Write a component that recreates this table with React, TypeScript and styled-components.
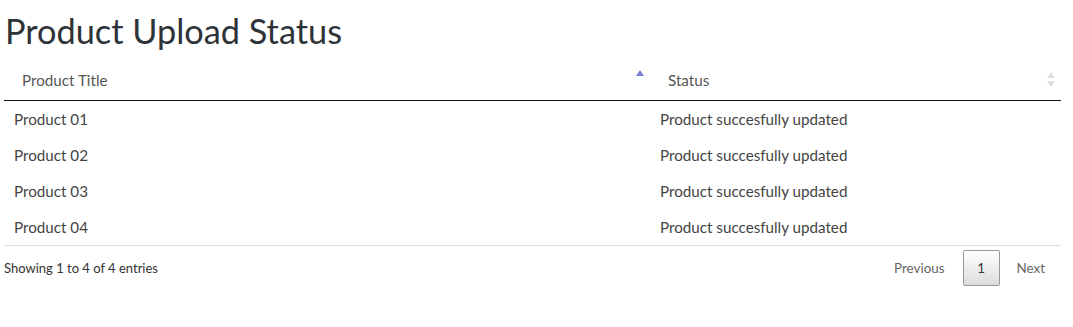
import React from "react";
import styled, { createGlobalStyle } from "styled-components";

const Global = createGlobalStyle`
  html, body { margin: 0; padding: 0; background: #fff; }
  body { font-family: Lato, "Open Sans", "Liberation Sans", sans-serif; color: #333; }
`;

const Page = styled.div`
  padding: 0 12px 0 4px;
`;

const Title = styled.h1`
  margin: 0;
  padding: 9px 0 0 1px;
  height: 61px;
  box-sizing: border-box;
  font-size: 34.3px;
  line-height: 44px;
  font-weight: 400;
  color: #2e3338;
`;

const Table = styled.table`
  width: 100%;
  border-collapse: collapse;
  table-layout: fixed;
  font-size: 15.2px;
`;

const HeadCell = styled.th<{ $w?: number }>`
  width: ${(p) => (p.$w ? `${p.$w}px` : "auto")};
  padding: 0 6px 0 18px;
  height: 39px;
  text-align: left;
  font-weight: 400;
  color: #555;
  border-bottom: 1px solid #111;
`;

const HeadInner = styled.div`
  display: flex;
  align-items: center;
  justify-content: space-between;
  margin-top: -1px;
`;

const Cell = styled.td`
  padding: 0 10px;
  height: 36px;
  color: #444;
`;

const Row = styled.tr<{ $last?: boolean }>`
  border-bottom: ${(p) => (p.$last ? "1px solid #ddd" : "none")};
`;

const Footer = styled.div`
  display: flex;
  align-items: center;
  justify-content: space-between;
  padding-top: 4px;
  height: 36px;
  font-size: 13px;
  color: #333;
`;

const Pager = styled.div`
  display: flex;
  align-items: center;
  gap: 2px;
  font-size: 13.4px;
`;

const PageButton = styled.span<{ $current?: boolean; $pad?: string }>`
  display: inline-flex;
  align-items: center;
  justify-content: center;
  box-sizing: border-box;
  height: 36px;
  min-width: ${(p) => (p.$current ? "37px" : "0")};
  padding: ${(p) => p.$pad ?? "0"};
  border: 1px solid ${(p) => (p.$current ? "#979797" : "transparent")};
  border-radius: 2px;
  background: ${(p) => (p.$current ? "linear-gradient(to bottom, #fff 0%, #dcdcdc 100%)" : "transparent")};
  color: ${(p) => (p.$current ? "#333" : "#666")};
`;

const AscIcon = () => (
  <svg width="8" height="14" viewBox="0 0 8 14" style={{ marginTop: -6 }}>
    <path d="M4 0 L8 6 L0 6 Z" fill="#7b7bd8" />
  </svg>
);

const BothIcon = () => (
  <svg width="8" height="16" viewBox="0 0 8 16">
    <path d="M4 0 L8 6 L0 6 Z" fill="#dedede" />
    <path d="M0 9 L8 9 L4 15 Z" fill="#dedede" />
  </svg>
);

const rows = ["Product 01", "Product 02", "Product 03", "Product 04"];

export default function App() {
  return (
    <Page>
      <Global />
      <Title>Product Upload Status</Title>
      <Table>
        <thead>
          <tr>
            <HeadCell $w={622}>
              <HeadInner>
                <span>Product Title</span>
                <AscIcon />
              </HeadInner>
            </HeadCell>
            <HeadCell>
              <HeadInner>
                <span>Status</span>
                <BothIcon />
              </HeadInner>
            </HeadCell>
          </tr>
        </thead>
        <tbody>
          {rows.map((r, i) => (
            <Row key={r} $last={i === rows.length - 1}>
              <Cell>{r}</Cell>
              <Cell>Product succesfully updated</Cell>
            </Row>
          ))}
        </tbody>
      </Table>
      <Footer>
        <span>Showing 1 to 4 of 4 entries</span>
        <Pager>
          <PageButton $pad="0 15px 0 15px">Previous</PageButton>
          <PageButton $current>1</PageButton>
          <PageButton $pad="0 15px 0 14px">Next</PageButton>
        </Pager>
      </Footer>
    </Page>
  );
}
